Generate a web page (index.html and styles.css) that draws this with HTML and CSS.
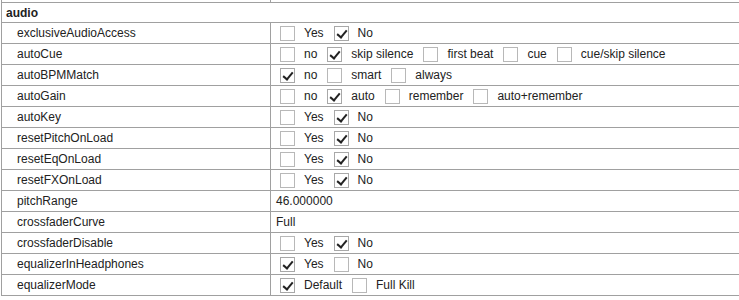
FILE: index.html
```html
<!DOCTYPE html>
<html lang="en">
<head>
    <meta charset="UTF-8">
    <title>audio settings</title>
    <link rel="stylesheet" href="styles.css">
</head>
<body>
    <table class="settings">
        <tr class="prev"><td></td><td></td></tr>
        <tr class="section"><td colspan="2">audio</td></tr>
        <tr>
            <td class="name">exclusiveAudioAccess</td>
            <td><div class="opts"><span class="cb"></span><span class="lbl">Yes</span><span class="cb on"></span><span class="lbl">No</span></div></td>
        </tr>
        <tr>
            <td class="name">autoCue</td>
            <td><div class="opts"><span class="cb"></span><span class="lbl">no</span><span class="cb on"></span><span class="lbl">skip silence</span><span class="cb"></span><span class="lbl">first beat</span><span class="cb"></span><span class="lbl">cue</span><span class="cb"></span><span class="lbl">cue/skip silence</span></div></td>
        </tr>
        <tr>
            <td class="name">autoBPMMatch</td>
            <td><div class="opts"><span class="cb on"></span><span class="lbl">no</span><span class="cb"></span><span class="lbl">smart</span><span class="cb"></span><span class="lbl">always</span></div></td>
        </tr>
        <tr>
            <td class="name">autoGain</td>
            <td><div class="opts"><span class="cb"></span><span class="lbl">no</span><span class="cb on"></span><span class="lbl">auto</span><span class="cb"></span><span class="lbl">remember</span><span class="cb"></span><span class="lbl">auto+remember</span></div></td>
        </tr>
        <tr>
            <td class="name">autoKey</td>
            <td><div class="opts"><span class="cb"></span><span class="lbl">Yes</span><span class="cb on"></span><span class="lbl">No</span></div></td>
        </tr>
        <tr>
            <td class="name">resetPitchOnLoad</td>
            <td><div class="opts"><span class="cb"></span><span class="lbl">Yes</span><span class="cb on"></span><span class="lbl">No</span></div></td>
        </tr>
        <tr>
            <td class="name">resetEqOnLoad</td>
            <td><div class="opts"><span class="cb"></span><span class="lbl">Yes</span><span class="cb on"></span><span class="lbl">No</span></div></td>
        </tr>
        <tr>
            <td class="name">resetFXOnLoad</td>
            <td><div class="opts"><span class="cb"></span><span class="lbl">Yes</span><span class="cb on"></span><span class="lbl">No</span></div></td>
        </tr>
        <tr>
            <td class="name">pitchRange</td>
            <td class="val">46.000000</td>
        </tr>
        <tr>
            <td class="name">crossfaderCurve</td>
            <td class="val">Full</td>
        </tr>
        <tr>
            <td class="name">crossfaderDisable</td>
            <td><div class="opts"><span class="cb"></span><span class="lbl">Yes</span><span class="cb on"></span><span class="lbl">No</span></div></td>
        </tr>
        <tr>
            <td class="name">equalizerInHeadphones</td>
            <td><div class="opts"><span class="cb on"></span><span class="lbl">Yes</span><span class="cb"></span><span class="lbl">No</span></div></td>
        </tr>
        <tr>
            <td class="name">equalizerMode</td>
            <td><div class="opts"><span class="cb on"></span><span class="lbl">Default</span><span class="cb"></span><span class="lbl">Full Kill</span></div></td>
        </tr>
    </table>
</body>
</html>
```

FILE: styles.css
```css
body {
    margin: 0;
    background: #fff;
    font-family: "Liberation Sans", Arial, sans-serif;
    font-size: 12px;
    color: #222;
}
.settings {
    border-collapse: collapse;
    margin-left: 1px;
    width: 760px;
}
.settings td {
    border: 1px solid #a0a0a0;
    height: 20px;
    padding: 0 5px;
    white-space: nowrap;
}
.settings td:first-child {
    width: 248px;
}
.settings .prev td {
    height: 2px;
    border-top: 0;
}
.settings .section td {
    height: 19px;
    padding-left: 4px;
    font-weight: bold;
}
.settings td.name {
    padding-left: 15px;
}
.opts {
    display: flex;
    align-items: center;
}
.cb {
    box-sizing: border-box;
    width: 15px;
    height: 15px;
    margin: 0 9px 0 4px;
    border: 1px solid #b8b8b8;
    background: #fff;
    position: relative;
}
.cb + .lbl {
    margin-right: 6px;
}
.lbl + .cb {
    margin-left: 4px;
}
.cb.on {
    border-color: #a8a8a8;
}
.cb.on::after {
    content: "";
    position: absolute;
    left: 4px;
    top: 1px;
    width: 4px;
    height: 8px;
    border: solid #222;
    border-width: 0 2px 2px 0;
    transform: rotate(40deg);
}
```
